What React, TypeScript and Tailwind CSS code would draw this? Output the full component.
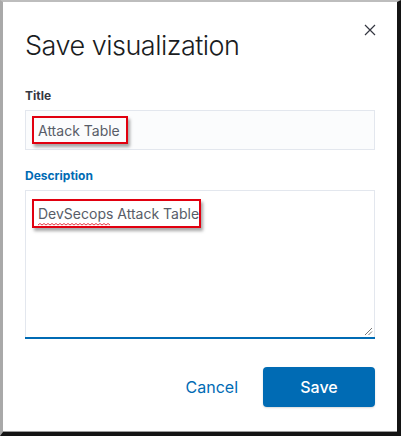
export default function App() {
  return (
    <div
      className="w-[401px] h-[436px] bg-white border-t-2 border-t-[#bdbdbd] border-l-[3px] border-l-[#a9a9a9] border-r-[4px] border-r-[#141414] border-b-[4px] border-b-[#141414]"
      style={{ fontFamily: 'Inter, "Noto Sans", sans-serif' }}
    >
      <div className="h-full border-b border-b-[#9a9a9a] flex flex-col px-[22px]">
        <div className="flex items-start justify-between pt-[26px]">
          <h1 className="text-[27px] leading-[36px] font-light text-[#1a1c21] tracking-[-0.5px]">
            Save visualization
          </h1>
          <button className="mt-[-4px] mr-[-1px] text-[#343741]">
            <svg width="12" height="12" viewBox="0 0 12 12">
              <path d="M1 1L11 11M11 1L1 11" stroke="#343741" strokeWidth="1.2" />
            </svg>
          </button>
        </div>

        <div className="mt-[24px] flex flex-col">
          <label className="text-[12px] font-bold text-[#343741] leading-[16px]">Title</label>
          <div className="mt-[6px] h-[40px] bg-[#fbfcfd] border border-[#e3e7ee] flex items-center px-[6px]">
            <div className="border-2 border-[#e1000f] h-[28px] w-[96px] px-[4px] flex items-center whitespace-nowrap shadow-[2px_3px_3px_rgba(0,0,0,0.35)]">
              <span className="text-[14px] text-[#585d68]">Attack Table</span>
            </div>
          </div>
        </div>

        <div className="mt-[18px] flex flex-col">
          <label className="text-[12px] font-bold text-[#006bb4] leading-[16px]">Description</label>
          <div className="mt-[6px] h-[149px] bg-white border border-[#e3e7ee] border-b-0 relative flex flex-col">
            <div className="flex-1 px-[6px] pt-[8px]">
              <div className="flex border-2 border-[#e1000f] h-[29px] w-[169px] px-[4px] items-center whitespace-nowrap shadow-[2px_3px_3px_rgba(0,0,0,0.35)]">
                <span className="text-[14px] text-[#585d68] whitespace-nowrap">
                  <span className="relative inline-block">
                    DevSecops
                    <svg className="absolute left-0 bottom-[-2px]" width="72" height="3" viewBox="0 0 72 3">
                      <path
                        d="M0 2 L2 0.5 L4 2 L6 0.5 L8 2 L10 0.5 L12 2 L14 0.5 L16 2 L18 0.5 L20 2 L22 0.5 L24 2 L26 0.5 L28 2 L30 0.5 L32 2 L34 0.5 L36 2 L38 0.5 L40 2 L42 0.5 L44 2 L46 0.5 L48 2 L50 0.5 L52 2 L54 0.5 L56 2 L58 0.5 L60 2 L62 0.5 L64 2 L66 0.5 L68 2 L70 0.5 L72 2"
                        stroke="#e1000f"
                        strokeWidth="0.8"
                        fill="none"
                      />
                    </svg>
                  </span>{' '}
                  Attack Table
                </span>
              </div>
            </div>
            <div className="h-[2px] bg-[#006bb4] -mx-px" />
            <svg className="absolute right-[1px] bottom-[3px]" width="9" height="9" viewBox="0 0 9 9">
              <path d="M1 8L8 1M4.5 8L8 4.5" stroke="#555" strokeWidth="0.8" />
            </svg>
          </div>
        </div>

        <div className="mt-[28px] flex items-center justify-end gap-[25px]">
          <button className="text-[16px] text-[#006bb4]">Cancel</button>
          <button className="w-[112px] h-[40px] rounded-[4px] bg-[#006bb4] text-white text-[16px] font-medium shadow-[0_1px_2px_rgba(0,0,0,0.15)]">
            Save
          </button>
        </div>
      </div>
    </div>
  );
}
